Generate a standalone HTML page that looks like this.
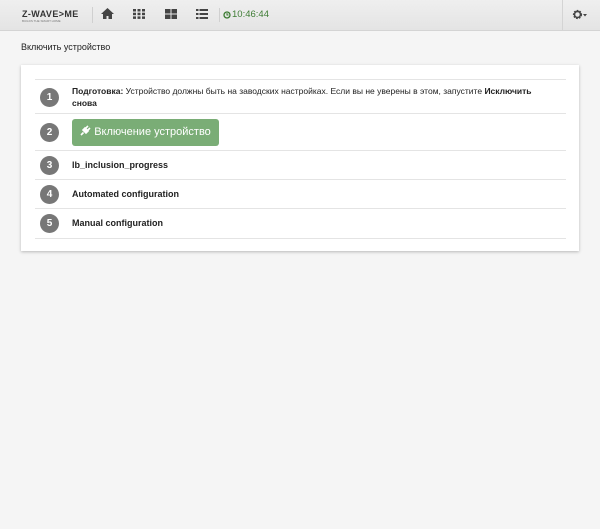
<!DOCTYPE html><html><head><style>
body{margin:0;width:600px;height:529px;background:#f5f5f5;font-family:"Liberation Sans",sans-serif;font-size:9px;color:#222;position:relative;overflow:hidden}
.nav{position:absolute;left:0;top:0;width:600px;height:30px;background:linear-gradient(#efefef,#e4e4e4);border-bottom:1px solid #d4d4d4}
.a{position:absolute}
.panel{position:absolute;left:21px;top:65px;width:558px;height:186px;background:#fff;box-shadow:0 1px 3px rgba(0,0,0,.25)}
.row{position:absolute;left:14px;width:531px;border-top:1px solid #e4e4e4}
.n{position:absolute;left:5px;width:19px;height:19px;border-radius:50%;background:#777;color:#fff;font-weight:bold;font-size:10px;text-align:center;line-height:19px}
.t{position:absolute;left:37px;font-weight:bold;font-size:9px}
</style></head><body>
<div class="nav">
<div class="a" style="left:22px;top:9px;font-weight:bold;font-size:9px;color:#333;letter-spacing:.4px">Z-WAVE&gt;ME</div>
<div class="a" style="left:22px;top:19px;font-size:3px;color:#777">BUILDS THE SMART HOME</div>
<div class="a" style="left:92px;top:7px;width:1px;height:16px;background:#d0d0d0"></div>
<svg class="a" style="left:101px;top:8px" width="13" height="11" viewBox="0 0 13 11"><path d="M6.5 0L0 6h2v5h3.5V8h2v3H11V6h2z" fill="#444"/></svg>
<svg class="a" style="left:133px;top:9px" width="12" height="10"><g fill="#444"><rect x="0" y="0" width="3" height="2.5"/><rect x="4.5" y="0" width="3" height="2.5"/><rect x="9" y="0" width="3" height="2.5"/><rect x="0" y="3.7" width="3" height="2.5"/><rect x="4.5" y="3.7" width="3" height="2.5"/><rect x="9" y="3.7" width="3" height="2.5"/><rect x="0" y="7.4" width="3" height="2.5"/><rect x="4.5" y="7.4" width="3" height="2.5"/><rect x="9" y="7.4" width="3" height="2.5"/></g></svg>
<svg class="a" style="left:165px;top:9px" width="12" height="10"><g fill="#444"><rect x="0" y="0" width="5.5" height="4.5"/><rect x="6.5" y="0" width="5.5" height="4.5"/><rect x="0" y="5.5" width="5.5" height="4.5"/><rect x="6.5" y="5.5" width="5.5" height="4.5"/></g></svg>
<svg class="a" style="left:196px;top:9px" width="12" height="10"><g fill="#444"><rect x="0" y="0" width="2.5" height="2"/><rect x="3.5" y="0" width="8.5" height="2"/><rect x="0" y="4" width="2.5" height="2"/><rect x="3.5" y="4" width="8.5" height="2"/><rect x="0" y="8" width="2.5" height="2"/><rect x="3.5" y="8" width="8.5" height="2"/></g></svg>
<div class="a" style="left:219px;top:8px;width:1px;height:14px;background:#d0d0d0"></div>
<svg class="a" style="left:223px;top:11px" width="8" height="8"><circle cx="4" cy="4" r="3" fill="none" stroke="#3a7a30" stroke-width="1.3"/><path d="M4 2v2h1.5" stroke="#3a7a30" fill="none"/></svg>
<div class="a" style="left:232px;top:9px;font-size:9.5px;color:#3f7d35">10:46:44</div>
<div class="a" style="left:562px;top:0;width:1px;height:30px;background:#d4d4d4"></div>
<svg class="a" style="left:572px;top:9px" width="16" height="11"><circle cx="5.5" cy="5.5" r="3.5" fill="none" stroke="#444" stroke-width="2.2" stroke-dasharray="1.6 1"/><circle cx="5.5" cy="5.5" r="3" fill="none" stroke="#444" stroke-width="1.5"/><path d="M11 5h4l-2 2.5z" fill="#444"/></svg>
</div>
<div class="a" style="left:21px;top:42px;font-size:9px">Включить устройство</div>
<div class="panel">
<div class="row" style="top:14px;height:34px"><div class="n" style="top:8px">1</div><div class="t" style="top:5px;font-weight:normal;line-height:12px;font-size:8.5px;white-space:nowrap"><b>Подготовка:</b> Устройство должны быть на заводских настройках. Если вы не уверены в этом, запустите <b>Исключить</b><br><b>снова</b></div></div>
<div class="row" style="top:48px;height:37px"><div class="n" style="top:9px">2</div><div class="a" style="left:37px;top:5px;width:147px;height:27px;background:#7aad76;border-radius:3px;color:#fff;font-size:11px;line-height:27px;text-align:center"><svg width="11" height="11" viewBox="0 0 11 11" style="vertical-align:-1px;margin-right:3px"><path d="M1 10l2.5-2.5M3 5l3 3 2-2-3-3zM6 3l2-2M8 5l2-2" stroke="#fff" stroke-width="1.6" fill="#fff"/></svg>Включение устройство</div></div>
<div class="row" style="top:85px;height:29px"><div class="n" style="top:5px">3</div><div class="t" style="top:9px">lb_inclusion_progress</div></div>
<div class="row" style="top:114px;height:29px"><div class="n" style="top:5px">4</div><div class="t" style="top:9px">Automated configuration</div></div>
<div class="row" style="top:143px;height:29px;border-bottom:1px solid #e4e4e4"><div class="n" style="top:5px">5</div><div class="t" style="top:9px">Manual configuration</div></div>
</div>
</body></html>
